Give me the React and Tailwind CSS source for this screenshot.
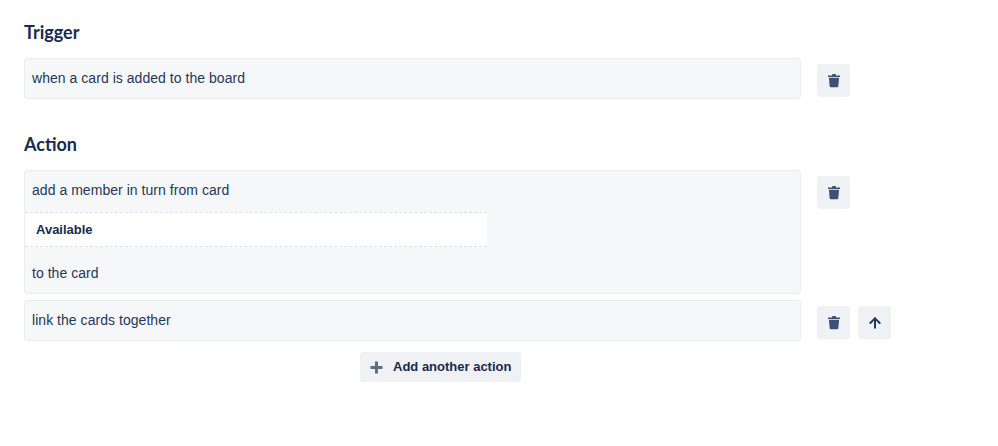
import { ArrowUp } from "lucide-react";

function TrashIcon() {
  return (
    <svg width="14" height="15" viewBox="0 0 14 15" fill="#3d5175">
      <path d="M1 2.4h3.9L5.4 1h3.2l.5 1.4H13v1.5H1z" />
      <path d="M1.9 4.7h10.2l-.8 8.6a1 1 0 0 1-1 .9H3.7a1 1 0 0 1-1-.9z" />
    </svg>
  );
}

function PlusIcon() {
  return (
    <svg width="13" height="13" viewBox="0 0 13 13" fill="#5e6c84">
      <path d="M5 0.5h3V5h4.5v3H8v4.5H5V8H0.5V5H5z" />
    </svg>
  );
}

function IconButton({ children }) {
  return (
    <button type="button" className="flex h-[33px] w-[33px] items-center justify-center rounded-[3px] bg-[#f0f1f4]">
      {children}
    </button>
  );
}

function Box({ children, className = "" }) {
  return (
    <div className={`w-[777px] shrink-0 rounded-[3px] border border-[#ebecf0] bg-[#f6f7f9] ${className}`}>
      {children}
    </div>
  );
}

function Line({ text }) {
  return (
    <div className="flex h-[39px] items-center px-[7px] text-[14px] tracking-[0.04px] text-[#253858]">{text}</div>
  );
}

function Heading({ children, className = "" }) {
  return (
    <h2 className={`font-['Lato',sans-serif] text-[18px] leading-[24px] font-bold text-[#172b4d] ${className}`}>
      {children}
    </h2>
  );
}

export default function App() {
  return (
    <div className="h-[446px] w-[998px] bg-white pt-[20px] pl-[24px] font-['Liberation_Sans',sans-serif]">
      <Heading>Trigger</Heading>

      <div className="mt-[14px] flex items-start gap-[16px]">
        <Box>
          <Line text="when a card is added to the board" />
        </Box>
        <div className="mt-[6px] flex gap-[8px]">
          <IconButton>
            <TrashIcon />
          </IconButton>
        </div>
      </div>

      <Heading className="mt-[33px]">Action</Heading>

      <div className="mt-[14px] flex items-start gap-[16px]">
        <Box className="h-[124px]">
          <Line text="add a member in turn from card" />
          <div className="mt-[2px] flex h-[35px] w-[462px] items-center border-y border-dashed border-[#dfe1e6] bg-white pl-[11px] text-[13px] font-bold text-[#172b4d]">
            Available
          </div>
          <div className="mt-[7px]">
            <Line text="to the card" />
          </div>
        </Box>
        <div className="mt-[6px] flex gap-[8px]">
          <IconButton>
            <TrashIcon />
          </IconButton>
        </div>
      </div>

      <div className="mt-[6px] flex items-start gap-[16px]">
        <Box>
          <Line text="link the cards together" />
        </Box>
        <div className="mt-[6px] flex gap-[8px]">
          <IconButton>
            <TrashIcon />
          </IconButton>
          <IconButton>
            <ArrowUp size={16} strokeWidth={3} color="#253858" />
          </IconButton>
        </div>
      </div>

      <div className="mt-[11px] flex w-[833px] justify-center">
        <button
          type="button"
          className="flex h-[30px] w-[161px] items-center rounded-[3px] bg-[#f0f1f4] pl-[10px] text-[13px] font-bold text-[#172b4d]"
        >
          <PlusIcon />
          <span className="ml-[10px] whitespace-nowrap">Add another action</span>
        </button>
      </div>
    </div>
  );
}
